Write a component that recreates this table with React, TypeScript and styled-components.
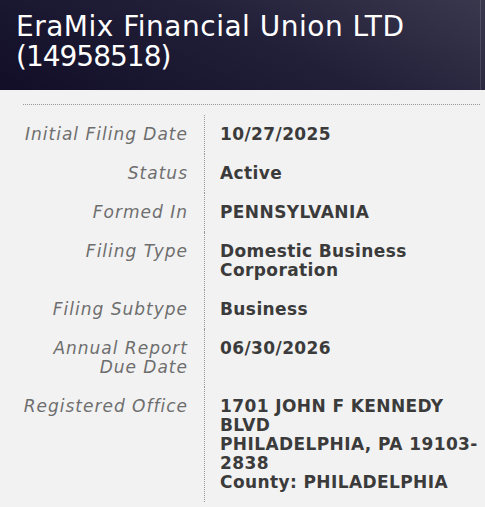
import styled, { createGlobalStyle } from 'styled-components'

const GlobalStyle = createGlobalStyle`
    html, body {
        margin: 0;
        padding: 0;
        background: #f2f2f2;
    }
    body {
        font-family: "DejaVu Sans", "Noto Sans", sans-serif;
    }
`

type Field = { label: string[]; value: string[] }

const fields: Field[] = [
    { label: ['Initial Filing Date'], value: ['10/27/2025'] },
    { label: ['Status'], value: ['Active'] },
    { label: ['Formed In'], value: ['PENNSYLVANIA'] },
    { label: ['Filing Type'], value: ['Domestic Business', 'Corporation'] },
    { label: ['Filing Subtype'], value: ['Business'] },
    { label: ['Annual Report', 'Due Date'], value: ['06/30/2026'] },
    {
        label: ['Registered Office'],
        value: ['1701 JOHN F KENNEDY', 'BLVD', 'PHILADELPHIA, PA 19103-', '2838', 'County: PHILADELPHIA'],
    },
]

export default function App() {
    return (
        <Page>
            <GlobalStyle />
            <Header>
                <Title>
                    EraMix Financial Union LTD
                    <br />
                    <FileNumber>(14958518)</FileNumber>
                </Title>
            </Header>
            <Body>
                <Details>
                    {fields.map((f) => (
                        <Row key={f.label.join(' ')}>
                            <Label>
                                {f.label.map((l) => (
                                    <Line key={l}>{l}</Line>
                                ))}
                            </Label>
                            <Value>
                                {f.value.map((v) => (
                                    <Line key={v}>{v}</Line>
                                ))}
                            </Value>
                        </Row>
                    ))}
                </Details>
            </Body>
        </Page>
    )
}

const Page = styled.div`
    width: 485px;
    min-height: 507px;
    background: #f2f2f2;
`

const Header = styled.header`
    height: 90px;
    box-sizing: border-box;
    padding: 12px 16px 0 16px;
    background:
        linear-gradient(to right, transparent 480px, rgba(255, 255, 255, 0.13) 480px, rgba(255, 255, 255, 0.13) 481px, transparent 481px),
        linear-gradient(25deg, #120e27 0%, #221f39 55%, #3a384d 100%);
`

const Title = styled.h1`
    margin: 0;
    color: #ffffff;
    font-size: 28px;
    font-weight: 400;
    line-height: 30px;
    letter-spacing: 0.5px;
`

const FileNumber = styled.span`
    letter-spacing: -1px;
`

const Body = styled.main`
    padding: 14px 5px 0 23px;
`

const Details = styled.div`
    border-top: 1px dotted #999;
    padding-top: 10px;
`

const Row = styled.div`
    display: grid;
    grid-template-columns: 182px 1fr;
`

const Label = styled.div`
    box-sizing: border-box;
    padding: 10px 16px 10px 0;
    border-right: 1px dotted #999;
    text-align: right;
    font-style: italic;
    font-size: 17px;
    line-height: 19px;
    letter-spacing: 1px;
    color: #6e6e6e;
`

const Value = styled.div`
    padding: 10px 0 10px 15px;
    font-size: 17px;
    font-weight: 700;
    line-height: 19px;
    letter-spacing: 0.4px;
    color: #3b3b3b;
`

const Line = styled.div`
    white-space: nowrap;
`
